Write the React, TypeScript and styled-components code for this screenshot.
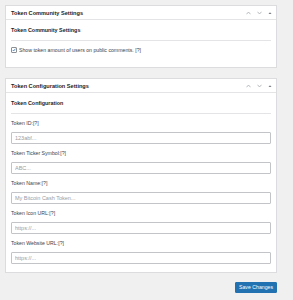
import styled, { createGlobalStyle } from "styled-components";

const GlobalStyle = createGlobalStyle`
  html, body {
    margin: 0;
    padding: 0;
    background: #f0f0f1;
  }
  body {
    font-family: "Liberation Sans", Arial, sans-serif;
    color: #1d2327;
  }
`;

const Page = styled.div`
  display: flex;
  flex-direction: column;
  gap: 10px;
  padding: 5px 16px 8px 5px;
  width: 293px;
  box-sizing: border-box;
`;

const Panel = styled.section`
  background: #fff;
  border: 1px solid #dcdcde;
  box-sizing: border-box;
`;

const PanelHeader = styled.header`
  display: flex;
  align-items: center;
  height: 13px;
  padding: 0 4px 0 5px;
  border-bottom: 1px solid #e4e4e6;
`;

const PanelTitle = styled.h2`
  flex: 1;
  margin: 0;
  font-size: 5.6px;
  font-weight: 700;
  line-height: 8px;
`;

const HeaderIcons = styled.div`
  display: flex;
  align-items: center;
  gap: 6px;
  color: #a7aaad;
`;

const PanelBody = styled.div<{ $bottom: number }>`
  padding: 6px 5px ${({ $bottom }) => $bottom}px 5px;
`;

const SectionHeading = styled.h3`
  margin: 0;
  font-size: 5.4px;
  font-weight: 700;
  line-height: 8px;
  color: #1d2327;
`;

const Separator = styled.hr`
  margin: 6px 0 5px 0;
  border: 0;
  border-top: 1px solid #e4e4e6;
`;

const CheckRow = styled.label`
  display: flex;
  align-items: center;
  gap: 2px;
  font-size: 5.2px;
  line-height: 8px;
  color: #3c434a;
`;

const CheckBox = styled.span`
  display: inline-flex;
  align-items: center;
  justify-content: center;
  width: 4px;
  height: 4px;
  border: 0.5px solid #8c8f94;
  border-radius: 1px;
  background: #fff;
`;

const Field = styled.div`
  display: flex;
  flex-direction: column;
  gap: 5px;
  margin-bottom: 5px;

  &:last-child {
    margin-bottom: 0;
  }
`;

const FieldLabel = styled.label`
  font-size: 5.2px;
  line-height: 8px;
  color: #3c434a;
`;

const TextInput = styled.input`
  box-sizing: border-box;
  width: 100%;
  height: 12px;
  margin: 0;
  padding: 0 3px;
  border: 1px solid #c3c4c7;
  border-radius: 1px;
  background: #fff;
  font-family: "Liberation Sans", Arial, sans-serif;
  font-size: 5.5px;
  color: #2c3338;
  outline: none;

  &::placeholder {
    color: #9a9da2;
  }
`;

const Footer = styled.div`
  display: flex;
  justify-content: flex-end;
  margin-top: -1px;
`;

const SaveButton = styled.button`
  width: 42px;
  height: 11px;
  padding: 0;
  border: 1px solid #2271b1;
  border-radius: 1px;
  background: #2271b1;
  color: #fff;
  font-family: "Liberation Sans", Arial, sans-serif;
  font-size: 5.2px;
  line-height: 9px;
`;

function PanelControls() {
  return (
    <HeaderIcons>
      <svg width="5" height="4" viewBox="0 0 10 8" fill="none" stroke="currentColor" strokeWidth="1.6">
        <path d="M1 6.5 L5 2 L9 6.5" />
      </svg>
      <svg width="5" height="4" viewBox="0 0 10 8" fill="none" stroke="currentColor" strokeWidth="1.6">
        <path d="M1 1.5 L5 6 L9 1.5" />
      </svg>
      <svg width="4" height="4" viewBox="0 0 8 8" fill="#787c82">
        <path d="M1 6 L4 2.5 L7 6 Z" />
      </svg>
    </HeaderIcons>
  );
}

const fields = [
  { label: "Token ID:[?]", placeholder: "123abf..." },
  { label: "Token Ticker Symbol:[?]", placeholder: "ABC..." },
  { label: "Token Name:[?]", placeholder: "My Bitcoin Cash Token..." },
  { label: "Token Icon URL:[?]", placeholder: "https://..." },
  { label: "Token Website URL:[?]", placeholder: "https://..." },
];

export default function App() {
  return (
    <>
      <GlobalStyle />
      <Page>
        <Panel>
          <PanelHeader>
            <PanelTitle>Token Community Settings</PanelTitle>
            <PanelControls />
          </PanelHeader>
          <PanelBody $bottom={13}>
            <SectionHeading>Token Community Settings</SectionHeading>
            <Separator />
            <CheckRow>
              <CheckBox>
                <svg width="4" height="4" viewBox="0 0 8 8" fill="none" stroke="#2271b1" strokeWidth="1.5">
                  <path d="M1.5 4 L3.3 6 L6.8 1.5" />
                </svg>
              </CheckBox>
              Show token amount of users on public comments. [?]
            </CheckRow>
          </PanelBody>
        </Panel>

        <Panel>
          <PanelHeader>
            <PanelTitle>Token Configuration Settings</PanelTitle>
            <PanelControls />
          </PanelHeader>
          <PanelBody $bottom={8}>
            <SectionHeading>Token Configuration</SectionHeading>
            <Separator />
            {fields.map((f) => (
              <Field key={f.label}>
                <FieldLabel>{f.label}</FieldLabel>
                <TextInput placeholder={f.placeholder} />
              </Field>
            ))}
          </PanelBody>
        </Panel>

        <Footer>
          <SaveButton>Save Changes</SaveButton>
        </Footer>
      </Page>
    </>
  );
}
